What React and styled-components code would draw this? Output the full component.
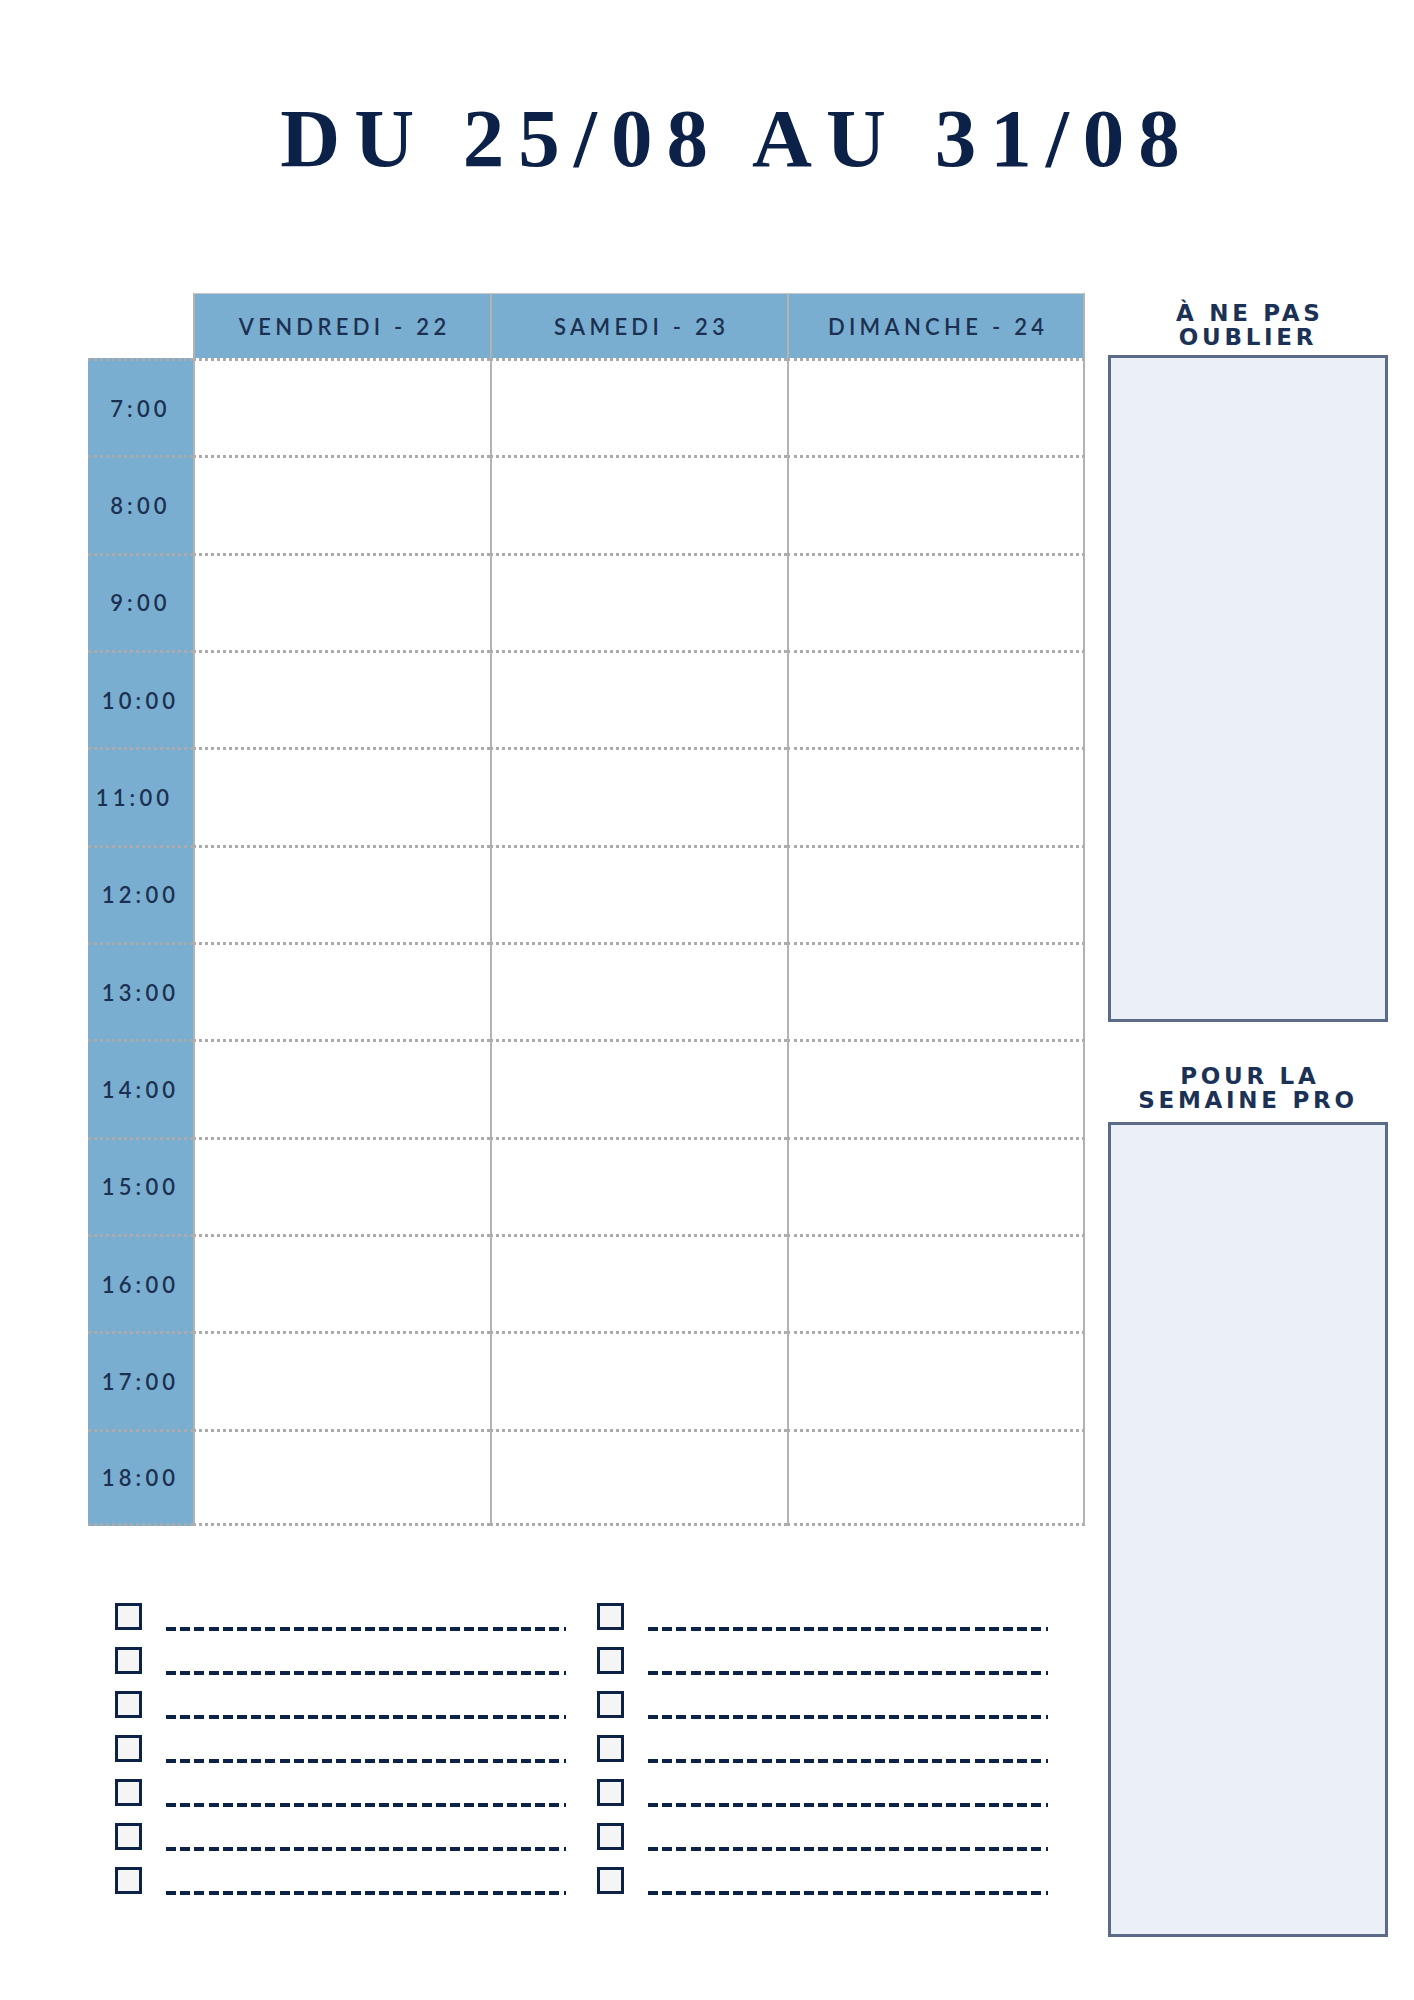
import React from "react";
import styled, { createGlobalStyle } from "styled-components";

const GlobalStyle = createGlobalStyle`
  html, body { margin: 0; padding: 0; background: #ffffff; }
  body { font-family: "Lato", "Open Sans", sans-serif; }
  * { box-sizing: border-box; }
`;

const Page = styled.div`
  width: 1414px;
  min-height: 2000px;
  background: #ffffff;
  position: relative;
`;

const Title = styled.h1`
  margin: 0;
  padding: 97px 34px 0 80px;
  font-family: "Liberation Serif", "Times New Roman", serif;
  font-weight: 700;
  font-size: 83px;
  line-height: 83px;
  letter-spacing: 14px;
  text-indent: 14px;
  color: #0c2148;
  text-align: center;
  white-space: pre;
`;

const Main = styled.div`
  display: flex;
  align-items: flex-start;
  gap: 23px;
  padding-left: 88px;
  margin-top: 113px;
`;

const LeftCol = styled.div`
  width: 997px;
  display: flex;
  flex-direction: column;
`;

const Schedule = styled.div`
  display: grid;
  grid-template-columns: 105px repeat(2, 297px) 298px;
  grid-template-rows: 65px repeat(12, 97.33px);
`;

const Corner = styled.div`
  background: #ffffff;
`;

const DayHead = styled.div`
  background: #7aaed0;
  border-top: 1px solid #c9c9c9;
  border-left: 2px solid #b3b3b3;
  border-right: ${(p) => (p.$last ? "2px solid #b3b3b3" : "none")};
  display: flex;
  align-items: center;
  justify-content: center;
  font-family: "Lato", sans-serif;
  font-weight: 600;
  font-size: 22px;
  letter-spacing: 4.3px;
  color: #1c3152;
  text-indent: 4.3px;
`;

const dotted = "3px dotted #ababab";

const TimeCell = styled.div`
  background: #7aaed0;
  border-top: ${dotted};
  border-bottom: ${(p) => (p.$last ? dotted : "none")};
  display: flex;
  align-items: center;
  justify-content: center;
  font-family: "Lato", sans-serif;
  font-weight: 600;
  font-size: 22px;
  letter-spacing: 4.2px;
  text-indent: ${(p) => p.$shift || 0}px;
  color: #1c3152;
`;

const Slot = styled.div`
  background: #ffffff;
  border-top: ${dotted};
  border-left: 2px solid #b3b3b3;
  border-right: ${(p) => (p.$lastCol ? "2px solid #b3b3b3" : "none")};
  border-bottom: ${(p) => (p.$lastRow ? dotted : "none")};
`;

const Checklist = styled.div`
  margin-top: 77px;
  padding-left: 27px;
  display: grid;
  grid-template-columns: 482px 482px;
`;

const CheckCol = styled.div`
  display: flex;
  flex-direction: column;
  gap: 17px;
`;

const CheckItem = styled.div`
  display: flex;
  align-items: flex-end;
  gap: 24px;
  height: 27px;
`;

const Box = styled.div`
  width: 27px;
  height: 27px;
  flex: none;
  border: 3px solid #0c2246;
  background: #f5f5f5;
`;

const DashLine = styled.div`
  width: ${(p) => p.$w || 400}px;
  height: 4px;
  margin-bottom: -1px;
  background: repeating-linear-gradient(
    to right,
    #0c2246 0,
    #0c2246 10px,
    transparent 10px,
    transparent 14.2px
  );
`;

const Side = styled.div`
  width: 280px;
  display: flex;
  flex-direction: column;
`;

const SideTitle = styled.h2`
  margin: ${(p) => p.$top}px 0 ${(p) => p.$bottom}px;
  font-family: "DejaVu Sans", "Lato", sans-serif;
  font-weight: 700;
  font-size: 23px;
  line-height: 24px;
  letter-spacing: 3.7px;
  text-indent: 3.7px;
  color: #1b3155;
  text-align: center;
`;

const NoteBox = styled.div`
  height: ${(p) => p.$h}px;
  border: 3px solid #5b6b87;
  background: #eaf0f5;
`;

const days = ["VENDREDI - 22", "SAMEDI - 23", "DIMANCHE - 24"];
const hours = [
  "7:00", "8:00", "9:00", "10:00", "11:00", "12:00",
  "13:00", "14:00", "15:00", "16:00", "17:00", "18:00",
];
const shifts = { "11:00": -12 };
const lines = [0, 1, 2, 3, 4, 5, 6];

export default function App() {
  return (
    <Page>
      <GlobalStyle />
      <Title>DU 25/08 AU 31/08</Title>
      <Main>
        <LeftCol>
          <Schedule>
            <Corner />
            {days.map((d, i) => (
              <DayHead key={d} $last={i === days.length - 1}>
                {d}
              </DayHead>
            ))}
            {hours.map((h, r) => (
              <React.Fragment key={h}>
                <TimeCell $last={r === hours.length - 1} $shift={shifts[h]}>
                  {h}
                </TimeCell>
                {days.map((d, c) => (
                  <Slot
                    key={d}
                    $lastCol={c === days.length - 1}
                    $lastRow={r === hours.length - 1}
                  />
                ))}
              </React.Fragment>
            ))}
          </Schedule>
          <Checklist>
            {[0, 1].map((col) => (
              <CheckCol key={col}>
                {lines.map((l) => (
                  <CheckItem key={l}>
                    <Box />
                    <DashLine />
                  </CheckItem>
                ))}
              </CheckCol>
            ))}
          </Checklist>
        </LeftCol>
        <Side>
          <SideTitle $top={8} $bottom={6}>
            À NE PAS
            <br />
            OUBLIER
          </SideTitle>
          <NoteBox $h={667} />
          <SideTitle $top={42} $bottom={10}>
            POUR LA
            <br />
            SEMAINE PRO
          </SideTitle>
          <NoteBox $h={815} />
        </Side>
      </Main>
    </Page>
  );
}
